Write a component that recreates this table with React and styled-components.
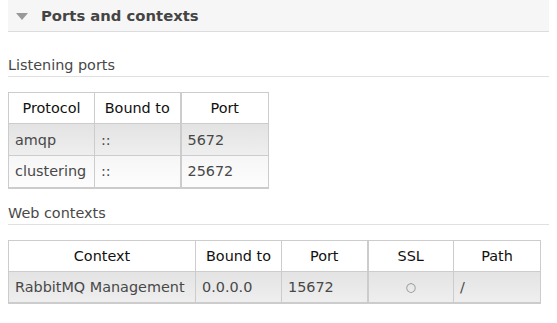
import React from "react";
import styled, { createGlobalStyle } from "styled-components";

// ----------------------------------------------------
// global
// ----------------------------------------------------
const GlobalStyle = createGlobalStyle`
  body {
    margin: 0 8px;
    background: #fff;
    font-family: "DejaVu Sans", Verdana, sans-serif;
    font-size: 14.4px;
    color: #484848;
  }
`;

// ----------------------------------------------------
// section header
// ----------------------------------------------------
const Section = styled.div`
  display: flex;
  flex-direction: column;
`;

const SectionHeader = styled.div`
  display: flex;
  align-items: center;
  gap: 13px;
  height: 31px;
  padding-left: 8px;
  background: #f6f6f6;
  border-bottom: 1px solid #dcdcdc;
`;

const Arrow = styled.span`
  width: 0;
  height: 0;
  border-left: 6px solid transparent;
  border-right: 6px solid transparent;
  border-top: 7px solid #999;
  margin-top: 2px;
`;

const SectionTitle = styled.h2`
  margin: 0;
  font-size: 14.8px;
  font-weight: bold;
  color: #444;
`;

const SubTitle = styled.h3`
  margin: ${(p) => p.$top}px 0 0;
  padding-bottom: 2px;
  font-size: 14.4px;
  line-height: 18px;
  font-weight: normal;
  color: #484848;
  border-bottom: 1px solid #e0e0e0;
`;

// ----------------------------------------------------
// tables
// ----------------------------------------------------
const ListTable = styled.table`
  align-self: flex-start;
  border-collapse: collapse;
  margin-top: ${(p) => p.$top}px;
  table-layout: fixed;
  line-height: 18px;
`;

const HeadCell = styled.th`
  width: ${(p) => p.$w}px;
  box-sizing: border-box;
  height: 31px;
  padding: 0 6px;
  font-weight: normal;
  text-align: center;
  color: #111;
  background: #fff;
  border: 1px solid #ccc;
  border-left-width: ${(p) => (p.$thick ? 2 : 1)}px;
`;

const Row = styled.tr`
  background: ${(p) =>
    p.$alt
      ? "linear-gradient(#f6f6f6, #fdfdfd)"
      : "linear-gradient(#e3e3e3, #efefef)"};
`;

const Cell = styled.td`
  height: 32px;
  box-sizing: border-box;
  padding: 0 6px;
  text-align: ${(p) => (p.$center ? "center" : "left")};
  color: #484848;
  border: 1px solid #ccc;
  border-left-width: ${(p) => (p.$thick ? 2 : 1)}px;
  border-bottom-width: ${(p) => (p.$last ? 2 : 1)}px;
`;

const Dim = styled.span`
  color: #888;
  font-size: 12px;
`;

const listeners = [
  { protocol: "amqp", bound: "::", port: "5672" },
  { protocol: "clustering", bound: "::", port: "25672" },
];

export default function App() {
  return (
    <>
      <GlobalStyle />
      <Section>
        <SectionHeader>
          <Arrow />
          <SectionTitle>Ports and contexts</SectionTitle>
        </SectionHeader>

        <SubTitle $top={24}>Listening ports</SubTitle>
        <ListTable $top={15}>
          <thead>
            <tr>
              <HeadCell $w={86}>Protocol</HeadCell>
              <HeadCell $w={86}>Bound to</HeadCell>
              <HeadCell $w={88} $thick>Port</HeadCell>
            </tr>
          </thead>
          <tbody>
            {listeners.map((l, i) => (
              <Row key={l.protocol} $alt={i % 2 === 1}>
                <Cell $last={i === listeners.length - 1}>{l.protocol}</Cell>
                <Cell $last={i === listeners.length - 1}>{l.bound}</Cell>
                <Cell $thick $last={i === listeners.length - 1}>{l.port}</Cell>
              </Row>
            ))}
          </tbody>
        </ListTable>

        <SubTitle $top={15}>Web contexts</SubTitle>
        <ListTable $top={15}>
          <thead>
            <tr>
              <HeadCell $w={187}>Context</HeadCell>
              <HeadCell $w={86}>Bound to</HeadCell>
              <HeadCell $w={86}>Port</HeadCell>
              <HeadCell $w={86} $thick>SSL</HeadCell>
              <HeadCell $w={87}>Path</HeadCell>
            </tr>
          </thead>
          <tbody>
            <Row>
              <Cell $last>RabbitMQ Management</Cell>
              <Cell $last>0.0.0.0</Cell>
              <Cell $last>15672</Cell>
              <Cell $thick $center $last>
                <Dim>○</Dim>
              </Cell>
              <Cell $last>/</Cell>
            </Row>
          </tbody>
        </ListTable>
      </Section>
    </>
  );
}
